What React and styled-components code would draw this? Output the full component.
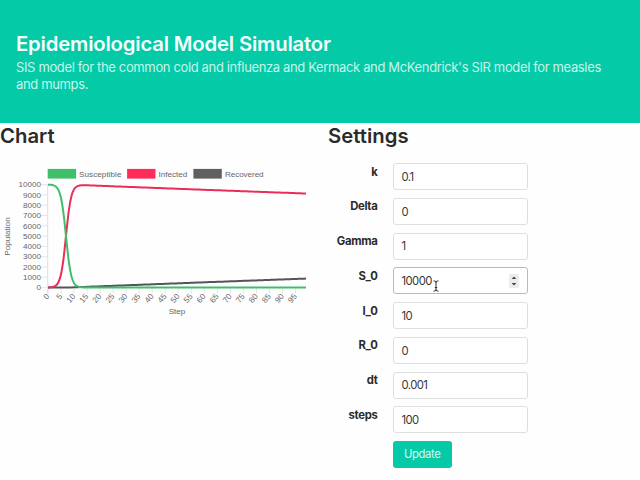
import React from "react";
import styled, { createGlobalStyle } from "styled-components";

const Global = createGlobalStyle`
  * { box-sizing: border-box; }
  body {
    margin: 0;
    background: #fefefe;
    color: #2b2b2b;
    font-family: Inter, "Liberation Sans", sans-serif;
    overflow: hidden;
  }
`;

const Page = styled.div`
  width: 640px;
  height: 480px;
  overflow: hidden;
`;

const Hero = styled.header`
  height: 123.4px;
  padding: 31px 16px 0;
  background: #04caa8;
`;

const Title = styled.h1`
  margin: 0;
  font-size: 20.3px;
  line-height: 25px;
  font-weight: 600;
  letter-spacing: -0.17px;
  color: #f4fffc;
  white-space: nowrap;
`;

const Subtitle = styled.p`
  margin: 3px 0 0;
  font-size: 13px;
  line-height: 17px;
  letter-spacing: -0.36px;
  color: #c6f6ea;
  white-space: nowrap;
`;

const Columns = styled.main`
  display: grid;
  grid-template-columns: 328px 1fr;
`;

const Heading = styled.h2`
  margin: 0;
  height: 40px;
  font-size: 20.3px;
  line-height: 25px;
  font-weight: 600;
  letter-spacing: 0.02px;
`;

const ChartSvg = styled.svg`
  display: block;
  font-family: "Liberation Sans", sans-serif;
  font-size: 8.1px;
  fill: #666;
`;

const Form = styled.form`
  display: grid;
  grid-template-columns: 49.5px 134.5px;
  column-gap: 15.5px;
  row-gap: 7.7px;
`;

const Label = styled.label`
  padding-top: 0.4px;
  font-size: 11.3px;
  line-height: 16px;
  font-weight: 700;
  letter-spacing: -0.3px;
  text-align: right;
  white-space: nowrap;
`;

const Field = styled.div`
  display: flex;
  align-items: center;
  justify-content: space-between;
  height: 27px;
  padding: 0.4px 8px 0;
  border: 1px solid ${(p) => (p.$active ? "#b9b9b9" : "#dedede")};
  border-radius: 3px;
  background: #fff;
  position: relative;
`;

const Value = styled.span`
  margin-left: -0.5px;
  font-size: 11.3px;
  letter-spacing: -0.55px;
  color: #363636;
`;

const Spinner = styled.svg`
  display: block;
`;

const Cursor = styled.svg`
  position: absolute;
  left: 38px;
  top: 12px;
`;

const Update = styled.button`
  grid-column: 2;
  justify-self: start;
  width: 58.5px;
  height: 27px;
  padding: 0;
  border: 0;
  border-radius: 3px;
  background: #04caa8;
  color: #d5faf1;
  font: 400 11.3px Inter, sans-serif;
  letter-spacing: -0.35px;
`;

const FIELDS = [
  ["k", "0.1"],
  ["Delta", "0"],
  ["Gamma", "1"],
  ["S_0", "10000"],
  ["I_0", "10"],
  ["R_0", "0"],
  ["dt", "0.001"],
  ["steps", "100"],
];

const LEFT = 48;
const BASE = 124.6;
const STEP = 2.606;
const UNIT = 0.0103;

function simulate() {
  const out = [];
  let recovered = 0;
  for (let t = 0; t < 100; t++) {
    const ratio = 1 / (1 + Math.exp(6.9 - t));
    const total = 10010 - recovered;
    const infected = total * ratio;
    out.push({ s: Math.max(0, total - infected), i: infected, r: recovered });
    recovered += infected * 0.001;
  }
  return out;
}

const DATA = simulate();

function curve(key) {
  const pts = DATA.map((d, t) => [LEFT + t * STEP, BASE - d[key] * UNIT]);
  let path = `M${pts[0][0]} ${pts[0][1]}`;
  for (let n = 0; n < pts.length - 1; n++) {
    const a = pts[Math.max(0, n - 1)];
    const b = pts[n];
    const c = pts[n + 1];
    const d = pts[Math.min(pts.length - 1, n + 2)];
    path += `C${b[0] + (c[0] - a[0]) / 6} ${b[1] + (c[1] - a[1]) / 6} ${c[0] - (d[0] - b[0]) / 6} ${c[1] - (d[1] - b[1]) / 6} ${c[0]} ${c[1]}`;
  }
  return path;
}

const LEGEND = [
  ["Susceptible", "#40bf6a", 47.7, 79, 42.5],
  ["Infected", "#ff2b59", 127.1, 158.4, 28.8],
  ["Recovered", "#606060", 193.4, 225, 38.6],
];

function Chart() {
  return (
    <ChartSvg width="328" height="170" viewBox="0 0 328 170">
      {LEGEND.map(([name, color, x, tx, w]) => (
        <g key={name}>
          <rect x={x} y="5.9" width="28.4" height="9.7" fill={color} />
          <text x={tx} y="13.6" textLength={w}>{name}</text>
        </g>
      ))}
      <path d={`M${LEFT - 0.3} 21.6V${BASE + 6}`} stroke="#d6d6d6" strokeWidth="0.8" />
      {Array.from({ length: 11 }, (_, n) => (
        <g key={n}>
          <path d={`M41.5 ${BASE - n * 10.3}H48`} stroke="#dedede" strokeWidth="0.8" />
          <text x="41" y={BASE - n * 10.3 + 2.7} textAnchor="end">{n * 1000}</text>
        </g>
      ))}
      {Array.from({ length: 20 }, (_, n) => {
        const x = LEFT + n * 5 * STEP;
        return (
          <g key={n}>
            <path d={`M${x} ${BASE}v6`} stroke="#dedede" strokeWidth="0.8" />
            <text transform={`translate(${x + 1.8} ${BASE + 9}) rotate(-50)`} textAnchor="end">{n * 5}</text>
          </g>
        );
      })}
      <g fill="none" strokeWidth="2">
        <path d={curve("r")} stroke="#555557" />
        <path d={curve("i")} stroke="#ea2e58" />
        <path d={curve("s")} stroke="#40bf6a" />
      </g>
      <text x="177" y="151.3" textAnchor="middle">Step</text>
      <text transform="translate(10.2 73.5) rotate(-90)" textAnchor="middle">Population</text>
    </ChartSvg>
  );
}

export default function App() {
  return (
    <Page>
      <Global />
      <Hero>
        <Title>Epidemiological Model Simulator</Title>
        <Subtitle>
          SIS model for the common cold and influenza and Kermack and McKendrick's SIR model for measles
          <br />
          and mumps.
        </Subtitle>
      </Hero>
      <Columns>
        <section>
          <Heading>Chart</Heading>
          <Chart />
        </section>
        <section>
          <Heading>Settings</Heading>
          <Form>
            {FIELDS.map(([name, value]) => (
              <React.Fragment key={name}>
                <Label>{name}</Label>
                <Field $active={name === "S_0"}>
                  <Value>{value}</Value>
                  {name === "S_0" && (
                    <>
                      <Spinner width="10" height="14" viewBox="0 0 10 14">
                        <rect width="10" height="14" rx="1.5" fill="#ececec" />
                        <path d="M2.7 5L5 2.4 7.3 5zM2.7 9L5 11.6 7.3 9z" fill="#444" />
                      </Spinner>
                      <Cursor width="8" height="12" viewBox="0 0 8 12">
                        <path
                          d="M1.5 .8Q4 .8 4 2.5Q4 .8 6.5 .8M4 2V10M1.5 11.2Q4 11.2 4 9.5Q4 11.2 6.5 11.2M2.8 7.5H5.2"
                          fill="none"
                          stroke="#333"
                          strokeWidth="1"
                        />
                      </Cursor>
                    </>
                  )}
                </Field>
              </React.Fragment>
            ))}
            <Update type="button">Update</Update>
          </Form>
        </section>
      </Columns>
    </Page>
  );
}
